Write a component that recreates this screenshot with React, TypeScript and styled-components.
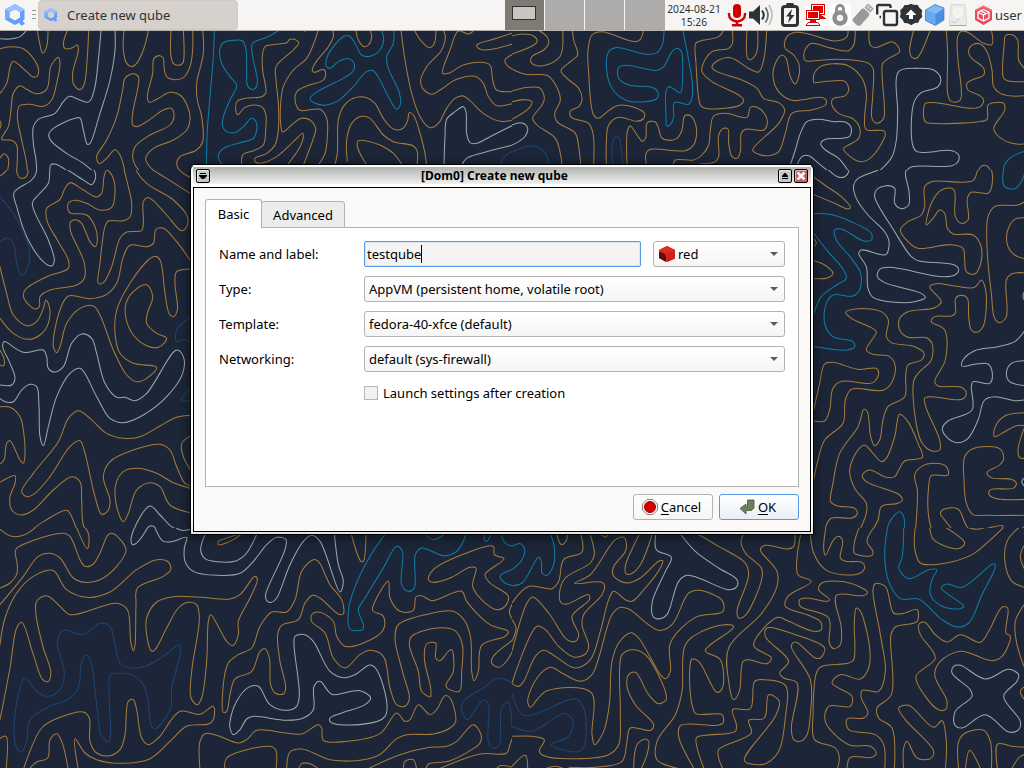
import React from "react";
import styled, { createGlobalStyle } from "styled-components";

const GlobalStyle = createGlobalStyle`
  * { box-sizing: border-box; }
  html, body { margin: 0; padding: 0; overflow: hidden; }
  body { font-family: "Noto Sans", "Open Sans", sans-serif; font-size: 13px; color: #000; }
`;

/* ---------- wallpaper ---------- */

type Tone = "g" | "w" | "c" | "n";
type Line = [Tone, string];

const tones: Record<Tone, string> = {
  g: "#a67c3c",
  w: "#9aa9a8",
  c: "#0f7ea6",
  n: "#1e4470",
};

interface Sheet {
  x: number;
  y: number;
  w: number;
  h: number;
  skip?: number;
  lines: Line[];
}

const sheets: Sheet[] = [
  {
    x: 0, y: 30, w: 512, h: 140,
    lines: [
      ["w", "0,26 30,27 60,20 80,0"],
      ["g", "0,56 30,50 70,56 100,85 115,115 112,138 100,141 80,125 40,94 32,105 20,160 0,190"],
      ["g", "112,0 118,35 128,69 140,50 144,0"],
      ["g", "203,0 190,40 195,56 215,54 232,45 235,60 218,130 222,165 240,179 252,165 262,80 266,0"],
      ["w", "303,0 295,90 285,170 272,210 262,217 240,210 208,199 190,215 165,250 115,268 100,290 100,340 108,390 110,425"],
      ["w", "345,0 345,60 330,150 300,250 270,340 262,343 250,300 240,264 225,265 160,295 146,315 155,335 200,370 250,400 280,425"],
      ["w", "150,425 152,405 165,402 205,425"],
      ["g", "372,0 370,60 380,100 395,110 410,100 430,60 446,0"],
      ["g", "513,0 513,80 520,100 533,106 548,100 552,80 550,0"],
      ["g", "578,0 578,60 570,110 550,143 525,149 500,140 492,110 490,85 480,77 462,85 458,130 442,200 448,217 470,208 510,187 540,195 565,235 570,270 560,300 520,330 460,355 437,385 445,405 465,425"],
      ["g", "608,0 610,70 590,160 592,210 605,260 608,335 590,360 540,380 530,400 540,425"],
      ["g", "375,425 360,375 345,359 320,385 298,401 290,380 320,330 350,260 368,180 375,145 400,131 415,140 415,165 398,250 398,285 410,290 440,275 490,240 515,235 522,260 510,285 450,315 405,350 398,380 405,405 420,425"],
      ["g", "50,425 52,380 50,345 35,331 5,328 25,290 32,250 40,190 60,167 80,178 110,191 140,178 152,110 165,90 175,82 180,100 170,160 155,210 130,229 90,223 58,228 52,260 65,330 80,400 82,425"],
      ["g", "0,385 12,371 25,385 22,425"],
      ["g", "0,272 3,284 0,296"],
      ["c", "643,0 640,80 630,200 622,300 619,410"],
      ["c", "838,0 800,22 760,38 755,50 760,90 772,150 768,172 755,178 742,165 740,120 738,60 728,33 700,31 670,38 659,60 665,100 690,140 710,165 690,210 670,260 668,290 680,305 705,308 730,290 755,265 768,275 770,300 760,325 720,338 670,355 655,375 660,395 670,405"],
      ["g", "725,405 728,375 760,362 790,345 797,300 797,250 785,230 760,225 735,232 713,254 707,235 712,213 735,205 785,200 797,190 797,170 788,120 788,70 795,50 830,43 860,38 870,28 890,31 896,40 880,60 828,110 828,150 835,220 835,300 825,345 800,370 765,385 765,395 780,400 830,380 880,335 908,310 910,320 900,350 862,405"],
      ["g", "910,405 945,310 947,295 930,270 905,265 880,280 848,306 842,280 842,220 850,170 880,120 920,85 955,0"],
      ["g", "998,0 1000,20 985,50 945,100 937,123 945,127 970,118 977,130 970,150 920,168 890,185 887,220 900,241 960,238 980,265 982,320 975,370 955,405"],
      ["g", "910,0 914,4 920,0"],
      ["c", "1145,0 1151,30 1140,60 1110,79 1085,75 1065,40 1048,18 1030,20 1000,50 980,85 979,110 990,115 1015,95 1045,86 1062,100 1060,122 1030,145 960,180 930,205 945,220 980,225 1015,212 1060,170 1100,125 1120,122 1140,150 1165,200 1190,238 1202,220 1195,180 1165,115 1160,80 1180,40 1182,0"],
      ["g", "1068,0 1075,30 1092,50 1105,45 1115,20 1110,0"],
      ["g", "1203,0 1215,90 1235,190 1260,260 1290,293 1315,280 1340,235 1365,205 1390,198 1410,212 1450,250 1500,274 1540,270"],
      ["g", "1243,0 1265,35 1290,53 1303,40 1308,0"],
      ["g", "1330,0 1336,20 1325,60 1280,110 1262,150 1268,175 1295,193 1320,180 1370,148 1425,139 1450,160 1465,200 1490,227 1540,220"],
      ["g", "1420,3 1405,12 1375,3 1350,60 1328,130 1345,130 1390,105 1440,97 1470,105 1478,150 1490,180 1540,184"],
      ["g", "1540,8 1490,25 1430,45 1440,58 1480,57 1540,41"],
      ["g", "1540,73 1515,90 1525,110 1540,118"],
      ["w", "1332,410 1335,320 1340,268 1365,245 1390,230 1398,245 1400,310 1410,338 1430,340 1470,320 1540,285"],
      ["w", "1385,405 1400,385 1450,368 1540,345"],
      ["n", "1505,405 1505,388 1540,362"],
      ["g", "1003,410 1012,370 1015,270 1030,230 1060,205 1100,203 1125,220 1150,265 1180,297 1205,297 1222,275 1228,248 1240,255 1260,310 1275,370 1280,410"],
      ["g", "1042,395 1040,330 1055,280 1085,259 1110,265 1150,315 1180,335 1240,348 1252,365 1250,410"],
      ["g", "1100,405 1072,350 1075,332 1095,332 1140,345 1180,370 1210,410"],
    ],
  },
  {
    x: 512, y: 30, w: 512, h: 140,
    lines: [
      ["g", "0,18 30,12 65,18 75,35 60,48 0,72"],
      ["w", "0,285 30,279 47,295 40,318 20,335 0,345"],
      ["n", "0,367 40,350 75,350 100,370 112,405"],
      ["g", "78,0 105,20 110,40 95,60 60,80 57,97 75,107 110,103 145,78 152,50 152,0"],
      ["g", "181,0 185,30 197,75 175,95 147,122 165,145 200,175 210,210 200,230 175,243 178,262 230,280 243,310 245,405"],
      ["g", "0,117 40,133 105,136 125,155 145,210 128,250 135,275 190,310 200,350 206,405"],
      ["g", "0,183 50,172 85,175 97,205 90,225 62,265 75,285 130,325 145,370 150,405"],
      ["g", "0,215 40,209 60,215 50,235 0,268"],
      ["g", "395,0 385,28 370,35 340,28 270,5 240,15 228,60 230,130 245,255 260,265 280,250 315,227 370,233 397,250 395,265 375,274 320,262 290,285 283,340 283,405"],
      ["c", "456,0 452,40 435,68 405,73 310,53 290,65 284,120 300,175 340,210 400,215 435,205 437,185 420,172 350,165 320,145 320,112 345,106 435,121 455,110 480,65 495,55 508,65 512,100 505,188 490,180 470,170 462,185 462,250 465,288 478,280 485,260 487,217 530,223 540,205 541,160 530,90 512,0"],
      ["g", "345,405 347,300 355,288 375,315 392,334 402,320 403,285 410,275 430,276 440,295 448,322 470,331 495,325 510,300 518,258 535,257 550,280 553,320 545,345 520,362 415,358 402,370 403,405"],
      ["n", "303,405 300,350 310,320 320,322 330,380 332,405"],
      ["g", "635,0 620,20 565,33 551,40 552,100 565,225 575,233 640,235 685,225 695,210 680,195 600,155 570,125 572,105 600,65 650,55 661,40 661,0"],
      ["g", "705,0 707,85 715,89 733,70 737,0"],
      ["g", "764,0 755,90 740,126 715,118 655,83 615,93 600,112 615,125 690,150 735,175 755,205 800,218 818,240 800,280 722,360 740,373 770,377 800,365 820,310 840,250 900,240 940,225 942,210 925,202 840,211 800,185 783,140 790,100 810,75 822,85 835,140 850,162 862,130 860,100 845,75 818,52 825,20 850,7 890,12 970,33 1005,20 1008,0"],
      ["g", "1030,0 1025,45 1010,62 960,55 900,40 885,50 875,75 880,92 910,92 980,88 1070,100 1083,115 1082,200 1080,265 1095,280 1115,265 1117,230 1110,130 1112,100 1130,85 1163,65 1155,45 1140,35 1090,53 1075,45 1071,0"],
      ["g", "1205,0 1193,65 1200,82 1215,84 1228,65 1255,0"],
      ["g", "905,158 905,135 925,110 965,101 1010,108 1050,145 1063,190 1058,260 1062,298 1115,302 1120,310 1100,355 1070,388 1045,395 1015,380 995,355 1010,345 1040,325 1042,290 1025,268 980,250 960,225 962,207 1000,197 1010,180 1000,155 970,152 905,159"],
      ["g", "1303,0 1307,70 1307,190 1315,212 1330,217 1345,210 1348,180 1338,90 1337,20 1350,3 1370,8 1415,40 1440,43 1438,0"],
      ["g", "1540,118 1520,90 1517,30 1500,14 1480,18 1477,40 1475,145 1490,153 1540,155"],
      ["g", "1540,197 1500,198 1465,190 1445,170 1440,120 1425,65 1405,42 1385,43 1370,60 1375,80 1415,115 1415,135 1380,150 1365,160 1368,180 1400,195 1415,210 1405,230 1380,235 1270,218 1240,220 1235,235 1240,275 1260,280 1400,275 1425,268 1428,225 1445,218 1475,220 1478,240 1445,295 1455,315 1500,340 1540,342"],
      ["w", "1100,425 1140,380 1153,330 1157,250 1160,125 1215,115 1265,120 1286,145 1278,170 1225,190 1205,220 1202,345 1215,365 1320,362 1340,375 1338,395 1320,407 1200,410 1185,420"],
      ["w", "833,410 850,360 865,310 885,275 920,268 965,275 1000,276 1018,295 1012,320 990,325 940,328 926,342 940,360 980,385 1010,425"],
      ["w", "855,405 870,380 890,377 920,400 950,425"],
      ["c", "1473,425 1480,400 1500,380 1540,363"],
      ["g", "1400,420 1410,407 1425,408 1435,420"],
      ["g", "565,402 610,395 620,380 620,315 635,295 648,297 650,340 660,380 675,385 685,365 688,310 700,298 755,300 766,280 760,255 735,232 715,232 705,262 640,250 605,258 595,300 590,345 570,375 545,390 490,390 483,405"],
    ],
  },
  {
    x: 0, y: 160, w: 195, h: 368, skip: 10,
    lines: [
      ["g", "25,0 20,30 0,48"],
      ["g", "52,0 50,35 58,52 70,55 82,45 82,0"],
      ["w", "110,0 108,40 95,60 42,98 50,140 80,230 130,305 155,318 163,300 145,240 97,130 115,105 145,70 152,20 165,10 195,25 250,60 275,74 287,50 275,20 235,0"],
      ["g", "365,0 380,60 395,130 390,170 370,182 325,183 315,200 300,310 295,370 310,368 335,320 360,235 380,216 425,212 430,190 430,125 440,113 455,118 500,165 545,212 560,200 562,170 520,120 440,70 408,30 400,0"],
      ["g", "435,0 440,15 500,55 575,103"],
      ["g", "532,0 532,20 550,40 575,54"],
      ["g", "105,447 118,440 120,410 150,390 230,375 253,355 253,310 235,265 212,215 212,185 230,180 245,190 270,245 285,260 292,240 285,200 260,165 208,157 205,130 225,121 260,130 300,150 335,142 345,100 338,50 320,30 312,50 305,100 290,111 250,90 210,68 195,85 180,118 140,145 142,185 175,245 205,300 205,325 140,350 75,390 72,415 105,447"],
      ["g", "0,320 20,400 40,465 80,497 110,485 130,445 138,420 148,440 145,490 120,525 85,538 40,520 0,475"],
      ["n", "0,110 50,175 80,240 89,290 80,330 65,346 52,320 40,250 22,235 0,245"],
      ["g", "575,308 530,245 490,205 468,208 460,250 440,260 390,256 370,290 350,370 320,403 270,416 205,408 180,450 160,560 170,578 180,560 200,490 240,445 280,438 300,465 340,570 380,645 410,665 440,655 470,622 400,610 360,580 345,520 350,450 390,370 445,300 465,289 480,300 495,400 508,462 520,470 532,450 525,370 530,335 575,327"],
      ["g", "500,535 470,520 440,490 442,460 458,410 440,374 400,395 378,430 378,475 400,525 440,557 475,562 500,535"],
      ["n", "575,468 530,510 530,545 550,538 575,549"],
      ["n", "575,678 545,720 575,721"],
      ["w", "0,675 35,675 45,655 30,610 8,560 12,545 70,577 130,570 140,590 145,625 165,636 190,620 215,550 245,522 275,535 290,580 315,670 350,712 375,712 405,722 440,700 530,570 550,590 548,640 500,710 430,765 370,788 330,775 290,710 240,625 210,640 170,710 145,800 130,857 120,830 117,740 110,680 90,673 65,690 40,725 15,725 0,715"],
      ["g", "0,570 13,600 10,618 0,615"],
      ["g", "0,740 30,742 60,770 70,810 75,880 70,910 60,900 30,842 20,850 12,900 0,912"],
      ["g", "575,766 530,772 480,798 420,830 370,835 320,820 270,775 235,752 205,775 175,845 100,940 65,995 80,1010 105,1000 150,950 210,860 240,842 255,880 285,1010 305,1063 325,1050 330,1020 310,950 330,905 400,870 480,853 510,870 530,920 555,970 575,977"],
      ["g", "575,986 520,968 470,940 410,925 370,935 348,970 350,1040 370,1085 385,1060 410,990 450,968 480,980 510,1035 575,1059"],
      ["g", "575,826 545,850 550,890 575,935"],
      ["g", "0,967 45,947 45,970 30,1010 35,1050 65,1065 100,1050 160,990 215,950 240,965 245,1020 250,1095 265,1120"],
      ["g", "0,1108 30,1128 70,1125 130,1085 200,1051 215,1070 240,1140"],
      ["w", "395,1140 410,1090 450,1038 480,1065 520,1103 575,1111"],
      ["w", "418,1140 450,1098 462,1100 480,1130"],
    ],
  },
  {
    x: 808, y: 160, w: 216, h: 368, skip: 10,
    lines: [
      ["w", "25,0 55,25 90,51 110,50 122,35 115,10"],
      ["g", "10,46 50,75 100,110 127,142 120,147 80,130 15,103"],
      ["w", "245,0 220,25 150,55 137,75 145,115 180,165 230,215 243,245 235,283 215,283 160,270 152,280 175,320 180,385 195,412 260,427 320,425 352,412 335,398 230,368 208,350 215,328 245,322 400,350 440,345 452,330 440,315 330,302 310,290 260,215 200,110 205,90 235,77 260,85 260,130 280,146 302,135 303,95 293,35 310,20 420,18 450,5"],
      ["c", "10,162 60,162 130,185 190,220 190,240 165,242 100,207 80,210 85,240 130,295 158,340 155,390 135,408 75,405 55,430 50,490 75,530 135,545 140,560 115,570 10,558"],
      ["c", "10,210 60,275 100,320 115,355 90,372 40,410 18,460"],
      ["g", "10,230 25,250 10,265"],
      ["g", "10,300 50,315 75,340 60,353 10,356"],
      ["g", "355,195 375,175 395,150 410,160 418,205 435,222 495,225 518,255 518,310 500,342 475,335 470,300 465,265 430,254 330,265 300,245 277,210 300,185 340,165 350,140 350,80 370,65 495,62 510,30 530,15 550,30 550,85 540,100 490,97 478,115 480,180 460,190 442,170 437,88 400,90 370,130 355,195"],
      ["c", "600,0 585,40 590,80 620,86 640,65 650,40"],
      ["g", "650,125 630,135 560,140 540,170 538,280 550,400 560,475 575,488 595,470 595,360 610,342 650,338"],
      ["g", "650,173 620,178 598,215 600,260 620,285 650,296"],
      ["g", "365,380 385,371 440,378 500,382 520,360 532,385 535,440 525,500 505,517 490,510 482,470 478,415 460,406 443,415 442,460 430,468 380,470 370,485 410,510 412,600 380,665 390,678 460,682 475,700 462,718 370,710 350,715 355,745 395,840 395,870 370,872 340,845 320,760 318,660 335,635 370,600 372,550 355,533 300,532 275,510 275,475 300,455 380,443 400,425 365,380"],
      ["g", "15,970 30,900 50,840 105,790 112,720 130,688 225,691 250,670 262,620 245,590 195,583 175,570 195,535 205,515 190,503 130,475 113,457 150,446 220,455 241,480 235,530 250,548 320,560 348,580 340,600 300,615 293,650 290,710 240,740 225,780 215,840 200,857 188,830 178,755 168,748 150,800 95,880 75,970 68,1025 85,1037 140,1045 148,1060 135,1073 70,1075 55,1095 50,1140"],
      ["g", "15,760 35,670 50,612 75,607 150,628 205,625 212,640 195,668 100,664 75,685 65,750 50,783 15,782"],
      ["g", "140,1140 175,1060 175,1030 140,985 125,930 150,870 170,856 195,880 220,905 235,895 260,830 275,763 300,785 330,850 343,892 290,903 272,930 260,950 235,952 185,930 163,945 175,965 275,1005 283,1020 270,1030 220,1040 210,1080 175,1140"],
      ["g", "320,1140 325,1080 328,990 320,945 340,920 380,910 415,920 420,945 370,947 362,980 362,1070 380,1140"],
      ["c", "232,1140 245,1085 275,1055 287,1070 288,1140"],
      ["w", "650,512 620,545 570,560 500,572 465,600 462,618 500,613 540,612 553,640 545,670 495,665 490,680 492,750 420,783 403,805 420,835 450,848 480,835 510,780 530,720 560,710 620,722 650,720"],
      ["w", "650,602 610,610 595,640 605,665 650,677"],
      ["g", "650,758 590,768 560,805 560,830 590,815 625,797 650,797"],
      ["g", "648,805 630,870 635,893 650,895"],
      ["g", "650,1018 560,1015 542,1000 550,988 615,985 625,970 610,958 550,953 537,937 575,915 587,895 575,866 495,866 470,890 468,960 475,1030 495,1064 530,1066 650,1066"],
      ["g", "460,1140 410,1080 397,1060 410,1047 450,1047 485,1108 585,1097 570,1115 500,1140"],
      ["g", "605,1140 650,1098"],
      ["w", "650,953 641,965 650,979"],
      ["w", "650,393 645,408 650,422"],
    ],
  },
  {
    x: 0, y: 528, w: 512, h: 240,
    lines: [
      ["g", "0,4 35,25 70,22 130,-20"],
      ["g", "222,-20 262,62 266,20 250,-10"],
      ["w", "405,-5 393,35 398,50 415,40 445,-5"],
      ["w", "463,-5 490,40 520,40 560,28 553,60 555,100 580,130 650,142 720,136 760,100 800,50 830,28 858,35 855,65 797,200 800,218 815,223 830,210 870,110 910,40 935,22 960,40 1020,192 1030,160 1015,110 1003,15"],
      ["w", "522,-4 545,7 575,4"],
      ["w", "615,20 602,65 615,92 650,101 710,98 740,75 772,15"],
      ["g", "710,20 680,30 655,40 655,50 670,48 700,35 728,15"],
      ["g", "1053,15 1083,100 1090,100 1098,15"],
      ["g", "0,180 30,165 50,140 52,110 47,65 80,45 190,16 210,25 240,95 255,115 280,108 300,75 325,20 340,17 378,65 350,115 300,155 255,163 220,150 180,90 150,76 115,85 70,145 0,230"],
      ["g", "0,350 15,270 50,195 100,145 158,127 200,185 260,208 330,192 410,125 470,95 505,102 512,125 490,145 412,180 408,230 405,350 400,368 392,340 382,245 350,226 210,260 180,235 140,203 110,220 108,260 130,360 152,430 145,460 128,455 100,380 65,283 50,300 30,420 0,575"],
      ["n", "540,350 490,385 440,413 395,420 360,405 345,350 330,295 300,286 250,320 190,307 172,340 180,380 193,440 175,490 140,505 110,490 75,450 60,480 42,600 50,660 65,672 80,640 90,575 140,540 210,510 235,480 245,400 258,382 272,400 290,530 305,625 325,642 332,620 328,520 332,440 360,435 400,442 435,480 455,595 465,603 512,540 515,480 540,380 540,350"],
      ["g", "0,632 18,625 18,725"],
      ["g", "70,725 125,600 180,568 250,552 268,570 270,640 290,675 330,683 360,665 375,620 385,520 400,515 410,545 425,630 445,650 475,630 540,550 600,559 640,535 640,575 625,588 560,595 510,640 450,692 370,706 290,695 255,675 225,632 235,725"],
      ["g", "88,722 110,702 143,690 150,635 170,617 185,640 205,725"],
      ["g", "455,370 440,320 440,270 470,222 520,206 600,208 690,213 720,200 765,145 772,155 750,210 715,280 715,320 698,353 680,340 632,260 625,280 620,400 605,510 592,530 573,510 575,430 598,270 590,230 565,223 535,240 500,300 465,365 455,370"],
      ["g", "670,553 667,510 685,405 715,380 755,360 780,295 815,252 860,252 885,215 905,130 940,95 955,100 990,170 1025,215 1030,258 1015,258 960,210 938,202 915,225 895,275 845,292 833,320 840,400 857,480 850,498 825,495 812,470 808,390 795,362 780,370 755,430 705,453 690,500 680,550 670,553"],
      ["w", "690,600 690,580 710,520 745,478 775,475 810,530 860,547 890,535 898,500 882,350 885,325 915,320 940,340 990,430 1030,449 1065,440 1110,411 1130,425 1155,565 1020,590 990,580 990,570 1025,555 1095,530 1112,510 1080,488 1000,500 985,490 960,460 942,475 940,545 910,570 860,577 760,565 740,573 720,605 700,620 690,600"],
      ["c", "1158,15 1110,85 1060,190 1045,250 1050,303 1088,305 1090,290 1075,245 1095,210 1150,120 1190,55 1207,70 1205,170 1225,190 1243,180 1246,80 1265,60 1330,83 1370,70 1400,15"],
      ["c", "1272,15 1300,35 1338,15"],
      ["c", "1455,15 1453,35 1460,40 1475,15"],
      ["c", "1503,15 1515,45 1540,55"],
      ["c", "1540,123 1500,145 1515,165 1540,173"],
      ["g", "935,280 937,258 960,253 1000,280 1010,325 1035,355 1090,345 1150,305 1150,265 1118,248 1125,220 1165,160 1170,210 1200,250 1240,247 1248,207 1265,203 1295,218 1385,190 1400,220 1470,290 1525,310 1515,325 1445,352 1435,430 1422,458 1415,430 1412,330 1395,280 1360,250 1290,257 1195,290 1185,330 1210,440 1228,510 1215,535 1190,530 1170,480 1150,385 1110,367 1080,380 1035,420 1000,390 975,315 935,280"],
      ["g", "1290,508 1265,490 1255,430 1228,350 1235,325 1310,300 1365,308 1387,350 1385,430 1378,490 1338,475 1360,430 1355,365 1345,370 1320,398 1307,390 1307,345 1280,348 1273,390 1292,480 1293,508"],
      ["g", "1285,155 1300,125 1400,75 1480,55 1483,80 1512,92 1455,140 1470,165 1525,205 1515,235 1490,245 1450,220 1418,175 1428,120 1410,118 1350,150 1300,163 1285,155"],
      ["g", "1540,222 1528,252 1540,278"],
      ["g", "1540,335 1480,385 1475,405 1495,418 1515,405 1540,365"],
      ["g", "600,725 600,640 615,617 650,622 715,645 740,635 770,607 850,614 905,618 955,590 965,600 970,637 1040,640 1140,617 1190,555 1215,580 1230,575 1255,530 1290,560 1310,545 1335,503 1350,510 1367,580 1350,600 1300,618 1220,620 1190,632 1130,685 1000,697 905,663 870,672 860,725"],
      ["g", "675,725 680,690 810,655 827,665 828,725"],
      ["g", "895,725 905,707 930,707 955,722"],
      ["g", "1278,725 1285,708 1345,700 1410,668 1440,645 1443,620 1420,590 1370,640 1340,655 1290,658 1200,680 1105,722"],
      ["g", "1318,722 1440,678 1520,675 1530,650 1540,622"],
      ["g", "1210,725 1215,700 1240,695 1250,725"],
      ["g", "1490,722 1500,713 1540,718"],
      ["n", "1540,467 1495,451 1450,480 1390,520 1385,545 1402,575 1450,515 1465,530 1465,640 1480,660 1498,650 1505,540 1525,522 1536,597"],
    ],
  },
  {
    x: 512, y: 528, w: 512, h: 240,
    lines: [
      ["c", "0,55 25,47 38,65 30,95 0,125"],
      ["c", "0,173 30,165 80,88 88,100 90,135 105,142 125,110 127,60 115,15"],
      ["n", "0,497 30,560 70,558 190,513 215,540 208,668 118,650 170,625 183,580 160,556 120,575 60,610 0,595"],
      ["g", "0,225 50,175 120,182 140,160 155,95 210,72 205,15"],
      ["g", "133,15 148,50 162,40 167,15"],
      ["g", "233,15 247,80 235,105 160,150 143,190 148,225 165,228 230,200 232,215 180,265 200,320 190,340 165,335 110,255 62,207 45,225 0,370"],
      ["g", "0,465 75,295 100,305 140,355 185,387 220,378 230,355 210,290 215,260 270,200 278,175 270,163 188,166 235,140 310,35 335,28 343,45 340,70 303,120 305,145 345,165 385,150 440,100 452,98 445,120 400,180 360,220 340,215 305,190 290,215 265,310 235,395 190,420 130,385 95,367 70,385 35,460 20,475 0,467"],
      ["g", "55,538 47,520 75,450 115,418 150,435 205,460 240,440 260,390 300,260 325,238 350,243 440,307 480,290 530,195 560,187 630,217 633,250 550,268 475,345 475,430 460,452 445,440 380,330 357,314 320,345 300,400 292,530 275,610 248,650 240,620 237,493 105,488 75,515 55,538"],
      ["g", "262,15 280,27 293,15"],
      ["g", "384,15 340,115 342,137 358,137 385,110 422,15"],
      ["w", "432,15 433,65 478,88 460,130 420,225 425,268 445,272 465,260 500,160 525,142 560,150 650,185 675,175 675,155 620,120 550,70 503,15"],
      ["g", "552,15 620,55 700,105 710,140 675,250 680,270 700,262 750,150 748,120 700,75 687,40 697,15"],
      ["g", "848,15 845,55 825,63 760,52 745,65 795,130 795,175 750,255 650,360 650,460 665,515 682,490 693,400 710,395 765,407 778,390 725,352 797,268 830,280 905,310 928,305 925,280 890,262 820,235 828,205 898,160 858,140 855,90 867,15"],
      ["g", "895,15 905,75 940,125 990,140 1045,135 1058,118 1050,103 1000,100 985,90 992,40 980,25 965,35 940,82 935,60 942,-5"],
      ["g", "1043,-5 1028,40 1027,75 1050,83 1080,82 1083,70 1065,40 1088,-5"],
      ["c", "1127,-5 1118,80 1130,160 1165,212 1220,213 1290,275 1335,297 1370,285 1410,200 1450,115 1445,107 1350,178 1305,168 1288,180 1355,235 1345,242 1290,235 1255,200 1260,155 1275,125 1250,125 1190,152 1160,120 1170,90 1175,-5"],
      ["g", "1210,-5 1208,60 1225,105 1290,107 1380,80 1430,40 1478,-5"],
      ["g", "1253,-5 1265,35 1340,62 1358,45 1295,-5"],
      ["g", "1362,-3 1395,4 1425,-3"],
      ["g", "1525,-5 1485,40 1480,110 1500,160 1540,179"],
      ["g", "1540,46 1525,85 1540,128"],
      ["g", "1118,725 1115,650 1090,620 1010,605 1005,573 1055,570 1068,555 1048,510 1050,487 1100,490 1120,430 1105,320 1083,185 1090,167 1120,175 1145,255 1170,257 1215,245 1215,280 1150,297 1137,320 1138,500 1095,540 1100,570 1140,600 1147,725"],
      ["g", "1270,390 1225,320 1220,290 1237,282 1270,320 1305,342 1345,320 1405,343 1430,310 1470,238 1487,240 1482,315 1495,325 1470,385 1440,398 1345,370 1285,400 1268,440 1305,520 1300,545 1280,545 1240,505 1212,445 1270,390"],
      ["g", "1540,225 1510,280 1515,350 1540,425"],
      ["g", "1540,474 1525,490 1540,518"],
      ["w", "1320,435 1325,415 1345,412 1420,453 1490,424 1520,440 1515,460 1475,505 1525,580 1520,605 1490,612 1420,560 1350,600 1328,590 1330,550 1380,505 1375,485 1320,435"],
      ["g", "920,185 930,165 980,160 1040,175 1067,195 1050,203 973,203 988,300 985,350 965,362 952,345 950,270 865,235 863,215 885,210 945,220 953,215 920,185"],
      ["g", "975,725 982,690 970,660 908,635 903,560 915,430 930,415 1010,405 1025,395 1027,280 1033,240 1045,250 1073,360 1070,420 1045,453 985,440 960,465 1020,505 1015,535 950,535 940,580 1010,650 1075,655 1093,675 1080,688 1015,688 1005,725"],
      ["g", "765,300 760,325 830,400 803,435 815,450 855,465 838,600 845,635 865,640 885,620 895,560 895,455 838,355 850,342 910,390 925,390 938,360 850,320 765,300"],
      ["g", "500,722 435,695 435,640 490,560 510,490 520,350 570,310 640,290 665,295 655,308 580,368 625,395 631,480 615,493 560,400 540,393 533,430 540,530 552,557 630,560 633,585 615,592 505,593 500,625 548,725"],
      ["g", "577,725 553,630 580,622 670,610 673,590 662,545 715,542 728,460 755,455 820,472 820,570 800,670 765,705 735,710 697,698 790,565 802,520 770,500 757,570 710,577 718,615 620,665 620,690 634,725"],
      ["g", "170,718 250,718 330,700 345,640 355,600 415,607 425,590 370,530 345,475 350,440 370,433 410,500 440,527 462,515 460,490 400,380 363,365 330,380 323,420 325,560 320,650 290,680 200,692 100,685 82,670 97,635 60,625 0,625"],
      ["g", "365,725 375,650 400,633 410,640 405,680 386,725"],
      ["g", "0,715 40,682 47,725"],
      ["g", "100,722 130,715 155,722"],
      ["g", "1175,725 1175,660 1185,640 1215,690 1255,692 1265,670 1180,575 1160,540 1190,532 1265,598 1290,578 1303,640 1300,725"],
      ["g", "1340,725 1340,640 1360,615 1415,607 1435,640 1438,725"],
      ["g", "1360,725 1373,667 1407,725"],
      ["g", "1457,725 1457,648 1500,655 1540,657"],
      ["g", "1498,725 1520,690 1540,678"],
      ["g", "0,275 12,300 0,340"],
    ],
  },
];

/* Centripetal Catmull-Rom spline through the given points, as cubic beziers. */
function spline(text: string): string {
  const p = text.split(" ").map((s) => s.split(",").map(Number));
  const n = p.length;
  const closed = n > 3 && p[0][0] === p[n - 1][0] && p[0][1] === p[n - 1][1];
  const at = (i: number) => {
    if (i < 0) return closed ? p[n - 2] : p[0];
    if (i >= n) return closed ? p[1] : p[n - 1];
    return p[i];
  };
  const gap = (a: number[], b: number[]) => Math.sqrt(Math.hypot(a[0] - b[0], a[1] - b[1])) || 0.001;
  let d = `M${p[0][0]} ${p[0][1]}`;
  for (let i = 0; i < n - 1; i++) {
    const [a, b, c, e] = [at(i - 1), at(i), at(i + 1), at(i + 2)];
    const d1 = gap(a, b), d2 = gap(b, c), d3 = gap(c, e);
    const out = [0, 1].map((k) =>
      d1 < 0.01 ? b[k] : (d1 * d1 * c[k] - d2 * d2 * a[k] + (2 * d1 * d1 + 3 * d1 * d2 + d2 * d2) * b[k]) / (3 * d1 * (d1 + d2)));
    const into = [0, 1].map((k) =>
      d3 < 0.01 ? c[k] : (d3 * d3 * b[k] - d2 * d2 * e[k] + (2 * d3 * d3 + 3 * d3 * d2 + d2 * d2) * c[k]) / (3 * d3 * (d3 + d2)));
    d += `C${out.map((v) => v.toFixed(1)).join(" ")} ${into.map((v) => v.toFixed(1)).join(" ")} ${c[0]} ${c[1]}`;
  }
  return d;
}

const Desktop = styled.div`
  position: relative;
  width: 1024px;
  height: 768px;
  overflow: hidden;
  background: #1c2638;
`;

const Backdrop = styled.svg`
  position: absolute;
  inset: 0;
`;

function Wallpaper() {
  return (
    <Backdrop width="1024" height="768" viewBox="0 0 1024 768" aria-hidden="true">
      {sheets.map((s, i) => {
        const skip = s.skip ?? 0;
        return (
          <svg key={i} x={s.x} y={s.y + skip} width={s.w} height={s.h - skip}
            viewBox={`0 ${skip * 3} ${s.w * 3} ${(s.h - skip) * 3}`} overflow="hidden">
            {s.lines.map(([tone, pts], j) => (
              <path key={j} d={spline(pts)} fill="none" stroke={tones[tone]} strokeWidth="3.1" />
            ))}
          </svg>
        );
      })}
    </Backdrop>
  );
}

/* ---------- panel ---------- */

const Panel = styled.header`
  position: relative;
  display: flex;
  align-items: stretch;
  height: 31px;
  background: #f6f5f4;
  border-bottom: 1px solid #b5b2a9;
  color: #2e3436;
`;

const MenuButton = styled.div`
  display: flex;
  align-items: center;
  width: 31px;
  padding-left: 4px;
`;

const Grip = styled.div`
  display: flex;
  flex-direction: column;
  gap: 3px;
  width: 7px;
  padding: 10px 2px 0 1px;
  i { height: 1px; background: #9b9b99; }
`;

const TaskButton = styled.div`
  display: flex;
  align-items: center;
  gap: 9px;
  width: 200px;
  padding: 0 0 1px 5px;
  background: #d6d1cd;
  border: 1px solid #cfc9c4;
  border-radius: 4px;
  white-space: nowrap;
`;

const Pager = styled.div`
  display: grid;
  grid-template-columns: 39px 39px 39px 40px;
  column-gap: 1px;
  width: 160px;
  margin-left: 267px;
`;

const Workspace = styled.div<{ $active?: boolean }>`
  display: flex;
  justify-content: center;
  padding-top: 6px;
  background: ${(p) => (p.$active ? "#7e7a74" : "#adacaa")};
`;

const MiniWindow = styled.div`
  width: 24px;
  height: 14px;
  margin-right: 1px;
  background: #c9c6c0;
  border: 1px solid #2e3436;
`;

const Clock = styled.div`
  width: 58px;
  padding-top: 3px;
  font-size: 10.3px;
  line-height: 13px;
  text-align: center;
`;

const Tray = styled.div`
  display: flex;
  margin-left: 2px;
`;

const User = styled.span`
  line-height: 30px;
`;

function QubesLogo({ size }: { size: number }) {
  return (
    <svg width={size} height={size} viewBox="0 0 22 22">
      <path d="M11 0L20.5 5.5 20.5 15.5 18.6 16.7 21 19.8 17.5 21.8 15.2 18.7 11 21 1 15.5 1 5.5Z M11 5.2L5.6 8.2 5.6 13.6 11 16.6 16 13.6 16 8.2Z" fill="#639cfb" fillRule="evenodd" />
      <path d="M11 0L20.5 5.5 16 8.2 11 5.2 5.6 8.2 1 5.5Z" fill="#99c0ff" />
      <path d="M1 5.5L5.6 8.2V13.6L1 15.5Z" fill="#79abff" />
    </svg>
  );
}

/* Each tray icon is drawn in panel pixels; `from` and `to` are its horizontal extent. */
function TrayIcon({ from, to, children }: { from: number; to: number; children: React.ReactNode }) {
  return (
    <svg width={to - from} height="30" viewBox={`${from} 0 ${to - from} 30`}>{children}</svg>
  );
}

function TrayIcons() {
  return (
    <Tray>
      <TrayIcon from={725} to={748}>
        <rect x="733" y="4" width="8" height="14" rx="4" fill="#d00000" />
        <path d="M729 13v1.5a8 7 0 0 0 16 0V13" fill="none" stroke="#d00000" strokeWidth="2.4" />
        <path d="M737 21v3.5M732 25.3h10" stroke="#d00000" strokeWidth="2.6" />
      </TrayIcon>
      <TrayIcon from={748} to={776}>
        <path d="M749 11.5h4l7-6.5v20l-7-6.5h-4z" fill="#2e3436" />
        <path d="M762 10.5q3.500 4.500 0 9" fill="none" stroke="#2e3436" strokeWidth="2" />
        <path d="M765.500 7.500q5 7.500 0 15" fill="none" stroke="#6d7071" strokeWidth="1.8" />
        <path d="M769 5q6 10 0 20" fill="none" stroke="#c0c0bf" strokeWidth="1.8" />
      </TrayIcon>
      <TrayIcon from={776} to={803}>
        <rect x="786" y="3" width="8" height="4" rx="1.5" fill="#2e3436" />
        <rect x="782.5" y="6.5" width="15" height="19" rx="2.5" fill="none" stroke="#2e3436" strokeWidth="3" />
        <path d="M792 9l-6 7.500h3.500L788 23l6.500-8h-3.700z" fill="#2e3436" />
      </TrayIcon>
      <TrayIcon from={803} to={829}>
        <rect x="805" y="4" width="22" height="22" fill="#fff" />
        <g fill="#fff" stroke="#e00000" strokeWidth="1">
          <rect x="811.5" y="4.5" width="13" height="10" />
          <rect x="813.5" y="6.5" width="9" height="6" fill="#e00000" />
          <path d="M815 15.500h6l4.500 3h-12z" fill="#e00000" />
          <rect x="806.5" y="10.5" width="13" height="9" />
          <rect x="808.5" y="12.5" width="9" height="5" fill="#e00000" />
          <path d="M808 22.500h10l2 3h-14z" />
          <path d="M810 21h6" strokeWidth="2" />
        </g>
      </TrayIcon>
      <TrayIcon from={829} to={852}>
        <rect x="829" y="4" width="22" height="22" fill="#fff" />
        <path d="M836.500 14V9a3.500 3.500 0 0 1 7 0v5" fill="none" stroke="#8e8e8e" strokeWidth="2.8" />
        <circle cx="840" cy="18" r="5.5" fill="#f4f4f4" stroke="#8e8e8e" strokeWidth="4.4" />
      </TrayIcon>
      <TrayIcon from={852} to={874}>
        <g transform="rotate(42 863 15)">
          <rect x="858" y="9.5" width="10" height="17" rx="3" fill="#999" />
          <rect x="859" y="3" width="8" height="5.5" fill="#acacab" />
          <path d="M861.500 4.500v2M864.500 4.500v2" stroke="#f6f5f4" />
        </g>
      </TrayIcon>
      <TrayIcon from={874} to={899}>
        <path d="M881 17h-1.500M877.200 14.500V6.500a1.500 1.500 0 0 1 1.500-1.500H889a1.500 1.500 0 0 1 1.500 1.500V8" fill="none" stroke="#2e3436" strokeWidth="2.4" />
        <rect x="884" y="11" width="13" height="14" rx="2" fill="#f6f5f4" stroke="#2e3436" strokeWidth="2.4" />
      </TrayIcon>
      <TrayIcon from={899} to={923}>
        <path d="M911 5l3 1 3-.2 1.600 2.700 2.500 2-.5 3 .6 3-2.300 2.200-1.200 3-3.200.4-3.500 1.900-3-1.700-3.300-.4-1.300-2.900-2.400-2.300.7-3-.5-3.200 2.400-1.900 1.500-2.700 3.200.1z" fill="#2e3436" stroke="#2e3436" strokeWidth="2" strokeLinejoin="round" />
        <path d="M911 9.500l5.500 5.500h-3.500v4h-4v-4h-3.500z" fill="#fff" />
      </TrayIcon>
      <TrayIcon from={923} to={946}>
        <path d="M935 4.500l9 3.500v12l-8.500 5.500-10-5V10z" fill="#4a8fe2" />
        <path d="M935 4.500l9 4-8.500 5.500-10-4z" fill="#82b9f5" />
        <path d="M925.500 10l10 4v11.500l-10-5z" fill="#6ba7ee" />
        <path d="M935 4.500l9 3.500v12l-8.500 5.500-10-5V10z" fill="none" stroke="#397bc8" strokeWidth=".7" />
      </TrayIcon>
      <TrayIcon from={946} to={970}>
        <path d="M951 4.500h14l1.500 16v5h-17v-5z" fill="#ebebe8" stroke="#d3d3cf" strokeWidth=".8" />
        <ellipse cx="958" cy="12.5" rx="6.300" ry="6.500" fill="#f4f4f2" stroke="#dededb" strokeWidth=".6" />
        <path d="M951 22l5 .5 3-4" fill="none" stroke="#c4c4c0" />
        <path d="M950 25.500h16" stroke="#a5a5a2" />
      </TrayIcon>
      <TrayIcon from={970} to={995}>
        <path d="M983.500 5.500l8.500 4.500v10l-8.500 5-8.500-5V10z" fill="#e84a62" />
        <path d="M983.500 5.500l8.500 4.500-1 1-7.500-4-7.500 4-1-1z" fill="#f67f6c" />
        <path d="M983.500 9.500l5.500 2.700v5.800l-5.500 3-5.500-3v-5.800z" fill="none" stroke="#fff" strokeWidth="1.3" />
        <path d="M978 12.300l5.500 2.700 5.500-2.700M983.500 15v6M980.800 10.900l5.500 2.700" fill="none" stroke="#fff" strokeWidth="1.2" />
      </TrayIcon>
    </Tray>
  );
}

/* ---------- dialog ---------- */

const Window = styled.section`
  position: absolute;
  left: 190px;
  top: 164px;
  width: 624px;
  height: 371px;
  display: flex;
  flex-direction: column;
  background: linear-gradient(#fff, #fff 96%, #dfe2df);
  border: 1px solid #000;
  border-radius: 6px 6px 0 0;
  box-shadow: 0 2px 9px 3px rgba(0, 0, 0, 0.35);
  padding: 0 2px 2px;
`;

const TitleBar = styled.div`
  display: flex;
  align-items: center;
  height: 22px;
  padding: 0 3px 0 1px;
  border-top: 2px solid #fff;
  border-bottom: 2px solid #fff;
  background: linear-gradient(#b0b3b0, #f3f4f3);
  box-shadow: inset 0 -1px 0 #fff;
`;

const Title = styled.h1`
  flex: 1;
  margin: 0;
  padding-left: 3px;
  font-size: 12px;
  line-height: 18px;
  font-weight: 700;
  text-align: center;
`;

const TitleButton = styled.span<{ $danger?: boolean }>`
  display: flex;
  align-items: center;
  justify-content: center;
  width: 14px;
  height: 14px;
  margin-left: 2px;
  border: 1px solid #000;
  border-radius: 2px;
  background: ${(p) => (p.$danger ? "#c25b5b" : "#c3c7c3")};
  box-shadow: inset 1px 1px 0 rgba(255, 255, 255, 0.6);
`;

const Client = styled.div`
  flex: 1;
  display: flex;
  flex-direction: column;
  padding: 11px;
  background: #faf9f8;
  border: 1px solid #000;
`;

const Tabs = styled.div`
  display: flex;
  align-items: flex-end;
  height: 29px;
  margin-bottom: -1px;
  position: relative;
`;

const Tab = styled.div<{ $selected?: boolean }>`
  display: flex;
  justify-content: center;
  align-items: center;
  width: ${(p) => (p.$selected ? 57 : 84)}px;
  height: ${(p) => (p.$selected ? 29 : 27)}px;
  margin-left: ${(p) => (p.$selected ? 0 : -1)}px;
  padding-top: ${(p) => (p.$selected ? 1 : 0)}px;
  background: ${(p) => (p.$selected ? "#fff" : "#ececec")};
  border: 1px solid #b3b2b1;
  border-bottom-color: ${(p) => (p.$selected ? "#fff" : "#b3b2b1")};
  border-radius: 3px 3px 0 0;
`;

const Pane = styled.div`
  height: 260px;
  padding: 13px;
  background: #fff;
  border: 1px solid #b3b2b1;
`;

const Form = styled.div`
  display: grid;
  grid-template-columns: 145px 1fr;
  row-gap: 9px;
  align-items: center;
`;

const NameFields = styled.div`
  display: grid;
  grid-template-columns: 277px 132px;
  gap: 12px;
`;

const NameInput = styled.div`
  display: flex;
  align-items: center;
  height: 26px;
  padding-left: 2px;
  background: #f5f4f3;
  border: 1px solid #559ae8;
  border-radius: 2px;
  box-shadow: inset 0 0 0 1px #dbe7f4;
`;

const Caret = styled.span`
  width: 1px;
  height: 18px;
  background: #000;
`;

const Combo = styled.div`
  display: flex;
  align-items: center;
  height: 26px;
  padding: 0 6px 0 4px;
  background: linear-gradient(#fff, #f5f5f5);
  border: 1px solid #b3b2b1;
  border-radius: 3px;
  white-space: nowrap;
`;

const Arrow = styled.i`
  margin-left: auto;
  border: 4.5px solid transparent;
  border-top: 4.5px solid #5c5c5c;
  border-bottom: 0;
`;

const CubeIcon = styled.svg`
  margin-right: 2px;
`;

const CheckRow = styled.div`
  grid-column: 2;
  display: flex;
  align-items: center;
  gap: 5px;
  height: 26px;
  margin-top: -1px;
`;

const CheckBox = styled.span`
  width: 14px;
  height: 14px;
  background: #f1f1f0;
  border: 1px solid #b8b7b6;
`;

const Footer = styled.div`
  display: flex;
  justify-content: flex-end;
  gap: 6px;
  margin-top: 7px;
`;

const Button = styled.div<{ $primary?: boolean }>`
  display: flex;
  align-items: center;
  justify-content: center;
  gap: 3px;
  width: 80px;
  height: 26px;
  padding-right: 3px;
  background: ${(p) => (p.$primary ? "linear-gradient(#fff, #eaeef5)" : "linear-gradient(#fff, #f5f5f5)")};
  border: 1px solid ${(p) => (p.$primary ? "#559ae8" : "#b3b2b1")};
  border-radius: 3px;
  u { text-decoration-thickness: 1px; text-underline-offset: 2px; }
`;

const rows = [
  ["Type:", "AppVM (persistent home, volatile root)"],
  ["Template:", "fedora-40-xfce (default)"],
  ["Networking:", "default (sys-firewall)"],
];

function Dialog() {
  return (
    <Window>
      <TitleBar>
        <TitleButton>
          <svg width="10" height="10" viewBox="0 0 10 10"><path d="M2 2h6v1H2zM1 4h8v1L6 8H4L1 5z" fill="#000" /></svg>
        </TitleButton>
        <Title>[Dom0] Create new qube</Title>
        <TitleButton>
          <svg width="10" height="10" viewBox="0 0 10 10"><path d="M2 7h6v1H2zM2 6V5l2.500-3h1L8 5v1z" fill="#000" /></svg>
        </TitleButton>
        <TitleButton $danger>
          <svg width="10" height="10" viewBox="0 0 10 10"><path d="M1.500 1.500l7 7M8.500 1.500l-7 7" stroke="#fff" strokeWidth="2.500" /></svg>
        </TitleButton>
      </TitleBar>
      <Client>
        <Tabs>
          <Tab $selected>Basic</Tab>
          <Tab>Advanced</Tab>
        </Tabs>
        <Pane>
          <Form>
            <span>Name and label:</span>
            <NameFields>
              <NameInput>testqube<Caret /></NameInput>
              <Combo>
                <CubeIcon width="18" height="18" viewBox="0 0 18 18">
                  <path d="M9 1l8 4v8.500L9 17l-8-4V5z" fill="#d9261e" />
                  <path d="M9 1l8 4-8 3.500L1 5z" fill="#df2b23" />
                  <path d="M1 7q6 .5 7 4.500V17l-7-4z" fill="#5b0d0d" />
                  <path d="M9 9l8-4v8.500L9 17z" fill="#cf221c" />
                </CubeIcon>
                red
                <Arrow />
              </Combo>
            </NameFields>
            {rows.map(([label, value]) => (
              <React.Fragment key={label}>
                <span>{label}</span>
                <Combo>{value}<Arrow /></Combo>
              </React.Fragment>
            ))}
            <CheckRow><CheckBox />Launch settings after creation</CheckRow>
          </Form>
        </Pane>
        <Footer>
          <Button>
            <svg width="16" height="16" viewBox="0 0 16 16">
              <path d="M5 .5h6L15.500 5v6L11 15.500H5L.5 11V5z" fill="#f2f2f0" stroke="#85857f" />
              <circle cx="8" cy="8" r="5.5" fill="#d40000" stroke="#a40000" />
            </svg>
            <span><u>C</u>ancel</span>
          </Button>
          <Button $primary>
            <svg width="16" height="16" viewBox="0 0 16 16">
              <path d="M8.500 1h6.500v8l-2.500 2.500H7V15L1 9.500 7 5v3h1.500z" fill="#6d7f5b" stroke="#475440" strokeWidth=".8" />
            </svg>
            <span><u>O</u>K</span>
          </Button>
        </Footer>
      </Client>
    </Window>
  );
}

export default function App() {
  return (
    <>
      <GlobalStyle />
      <Desktop>
        <Wallpaper />
        <Panel>
          <MenuButton><QubesLogo size={22} /></MenuButton>
          <Grip><i /><i /><i /></Grip>
          <TaskButton><QubesLogo size={14} />Create new qube</TaskButton>
          <Pager>
            <Workspace $active><MiniWindow /></Workspace>
            <Workspace /><Workspace /><Workspace />
          </Pager>
          <Clock>2024-08-21<br />15:26</Clock>
          <TrayIcons />
          <User>user</User>
        </Panel>
        <Dialog />
      </Desktop>
    </>
  );
}
